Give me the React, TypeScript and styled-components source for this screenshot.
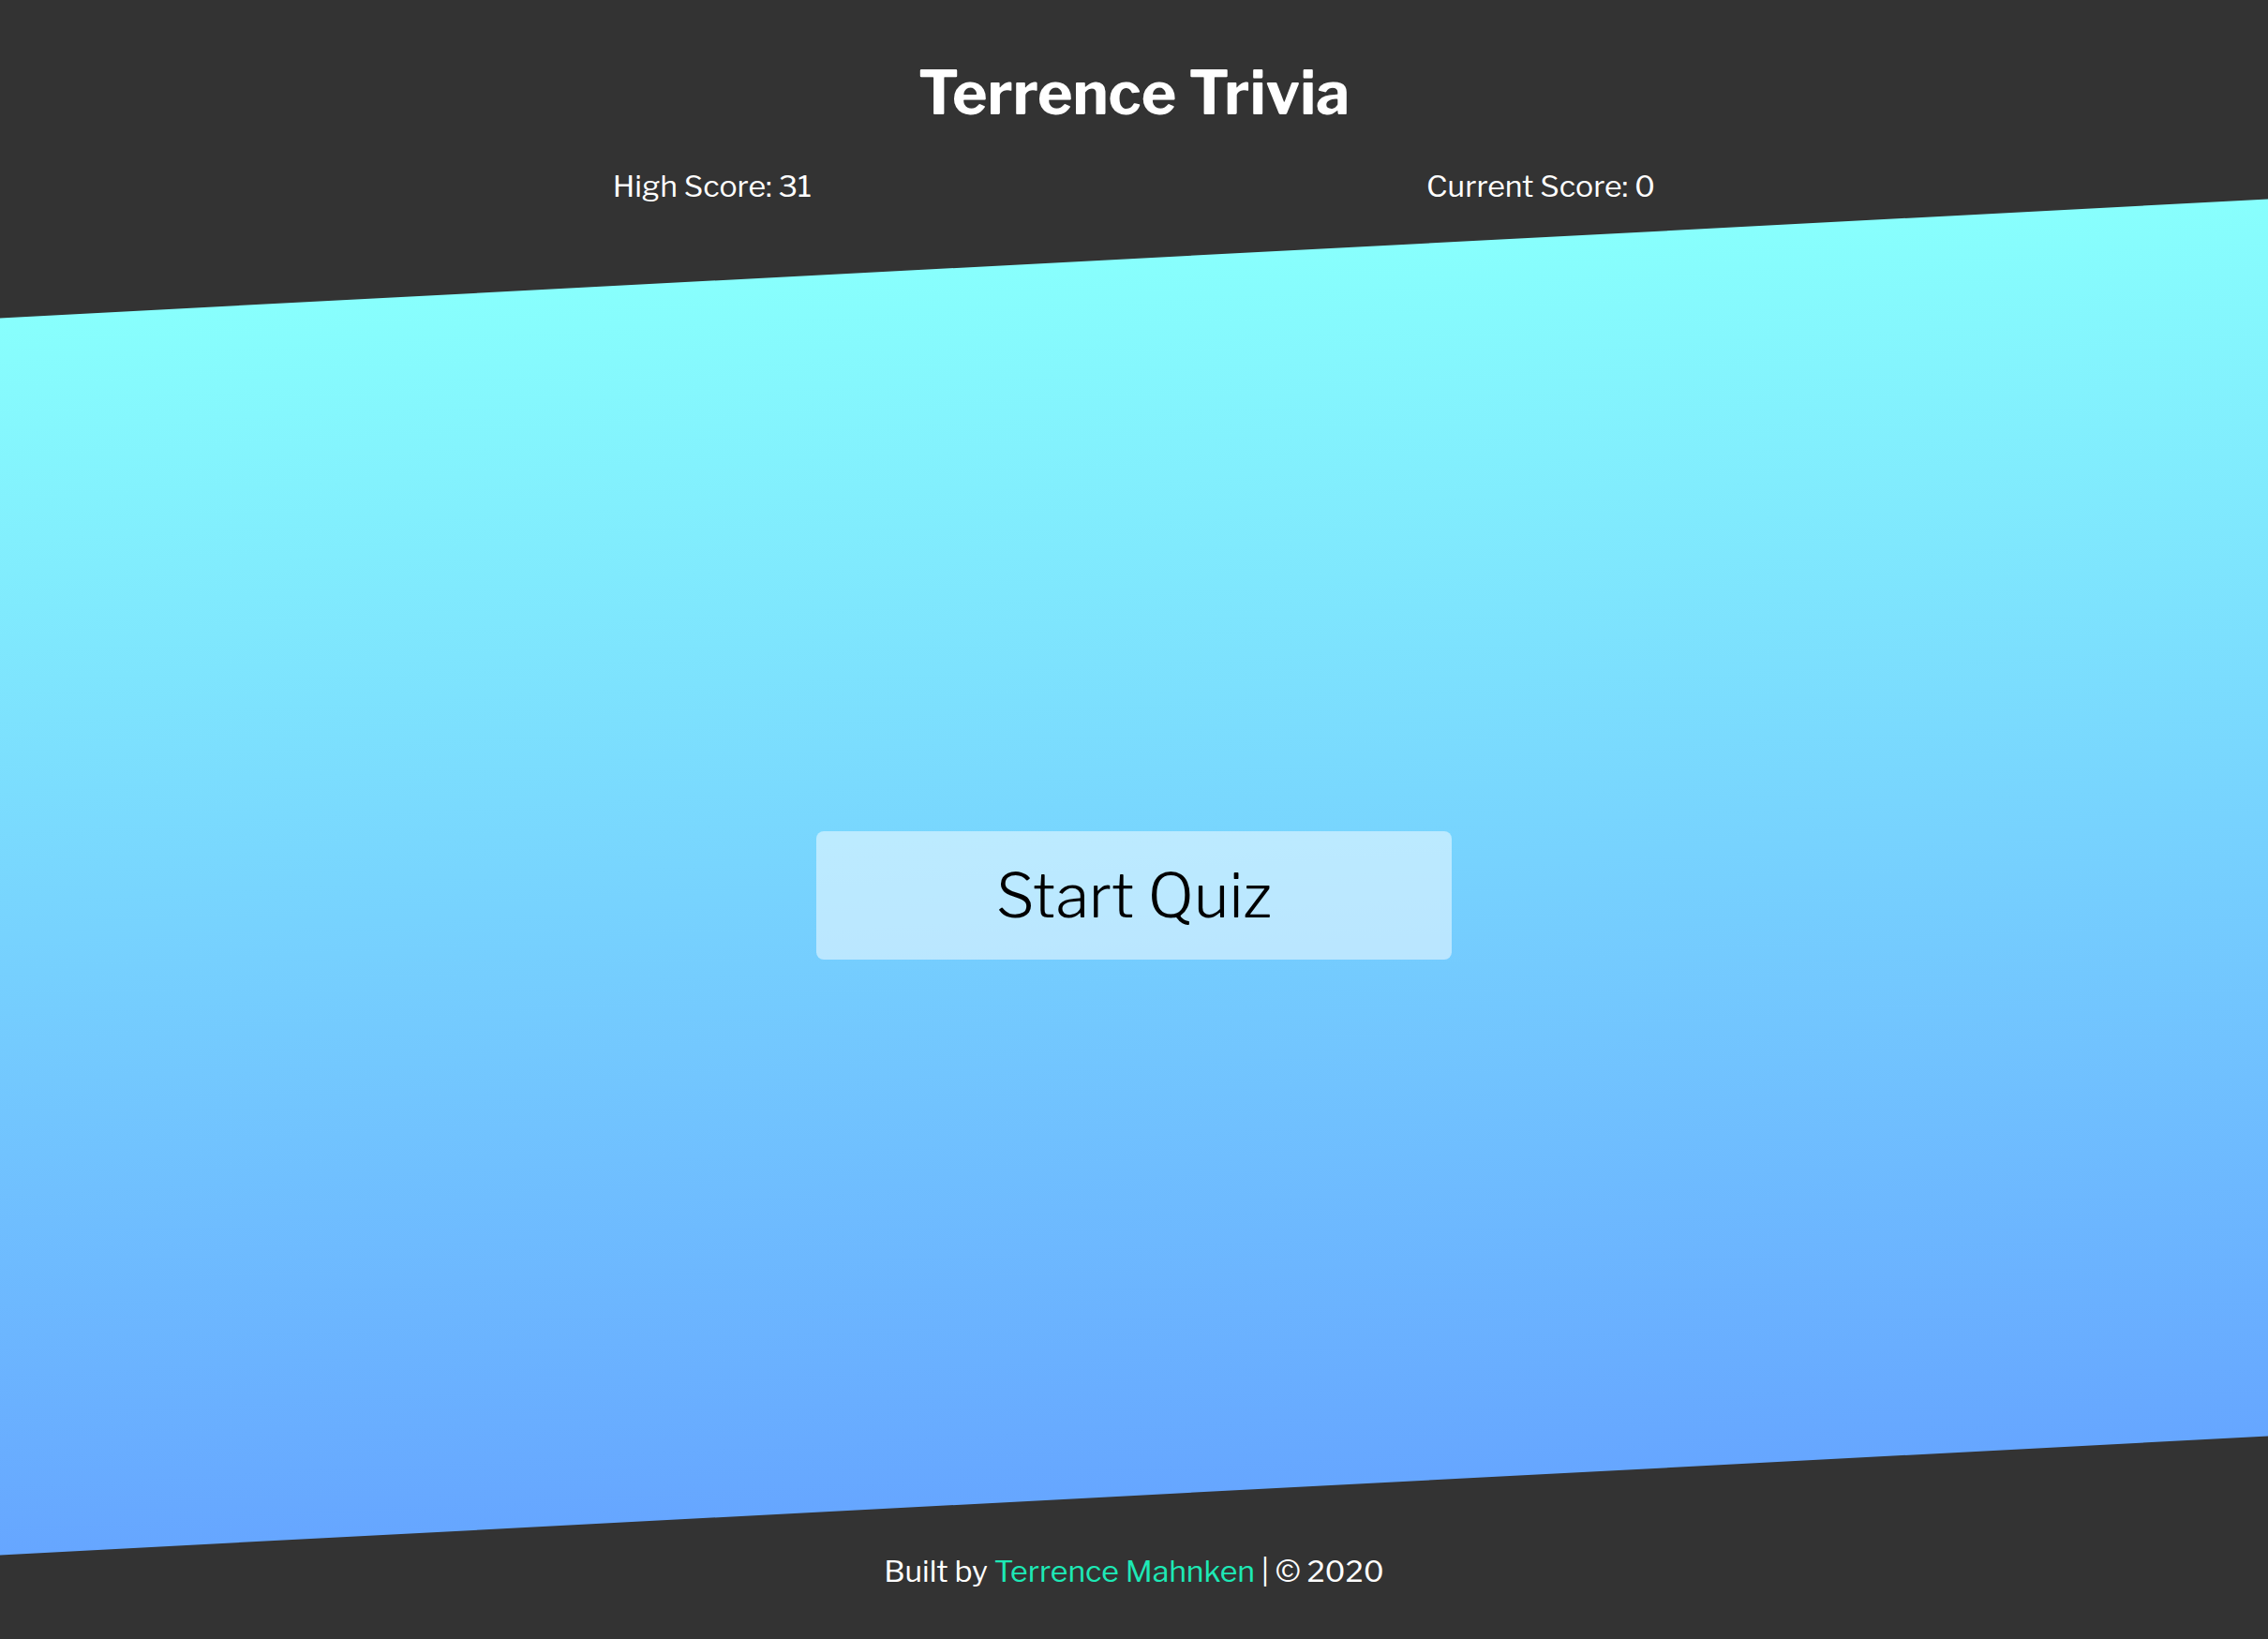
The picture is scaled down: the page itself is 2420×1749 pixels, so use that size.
import React from "react";
import styled, { createGlobalStyle } from "styled-components";

const GlobalStyle = createGlobalStyle`
  html, body { margin: 0; padding: 0; }
  body {
    background: #333333;
    font-family: "Libre Franklin", Inter, "Noto Sans", sans-serif;
    color: #ffffff;
    overflow: hidden;
  }
`;

const Page = styled.div`
  height: 1749px;
  display: flex;
  flex-direction: column;
  background: #333333;
`;

const Header = styled.header`
  height: 276px;
  display: flex;
  flex-direction: column;
  align-items: center;
`;

const Title = styled.h1`
  margin: 67px 0 0;
  font-size: 64px;
  line-height: 1;
  font-weight: 700;
  color: #ffffff;
`;

const Scores = styled.div`
  margin-top: 52px;
  display: flex;
  justify-content: center;
  gap: 656px;
  width: 100%;
`;

const Score = styled.span`
  font-size: 32px;
  line-height: 1;
  font-weight: 400;
`;

const Band = styled.main`
  height: 1320px;
  transform: skewY(-3deg);
  background: linear-gradient(to bottom, #88fffd 0%, #66a6ff 100%);
  display: flex;
`;

const BandInner = styled.div`
  flex: 1;
  transform: skewY(3deg);
  display: flex;
  align-items: center;
  justify-content: center;
  padding-top: 38px;
`;

const StartButton = styled.button`
  width: 678px;
  height: 137px;
  border: none;
  border-radius: 8px;
  background: rgba(255, 255, 255, 0.5);
  color: #000000;
  font-family: inherit;
  font-size: 65px;
  font-weight: 300;
  cursor: pointer;
`;

const Footer = styled.footer`
  flex: 1;
  display: flex;
  align-items: center;
  justify-content: center;
  padding-top: 7px;
  font-size: 32px;
`;

const Link = styled.a`
  color: #1de9b6;
  text-decoration: none;
`;

export default function App() {
  return (
    <>
      <GlobalStyle />
      <Page>
        <Header>
          <Title>Terrence Trivia</Title>
          <Scores>
            <Score>High Score: 31</Score>
            <Score>Current Score: 0</Score>
          </Scores>
        </Header>
        <Band>
          <BandInner>
            <StartButton>Start Quiz</StartButton>
          </BandInner>
        </Band>
        <Footer>
          <span>
            Built by <Link href="#">Terrence Mahnken</Link> | © 2020
          </span>
        </Footer>
      </Page>
    </>
  );
}
